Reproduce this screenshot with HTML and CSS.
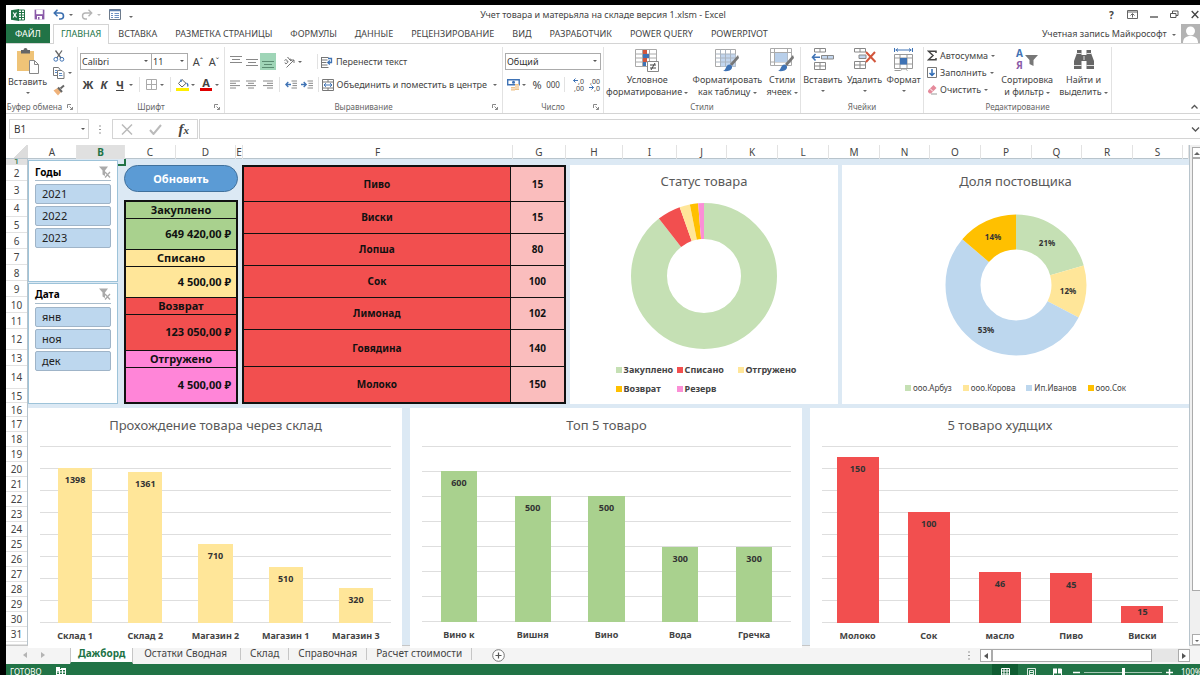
FILE: index.html
```html
<!DOCTYPE html>
<html lang="ru">
<head>
    <meta charset="UTF-8">
    <meta name="viewport" content="width=device-width, initial-scale=1.0">
    <title>Учет товара и матерьяла на складе версия 1.xlsm - Excel</title>
    <link rel="stylesheet" href="styles.css">
</head>
<body>
<div class="app">

    <!-- Title bar -->
    <header class="titlebar">
        <div class="quick">
            <svg class="logo" width="14" height="12" viewBox="0 0 14 12"><path d="M7 1h6.500v10H7z" fill="#fff" stroke="#217346"/><path d="M8 3.500h5M8 6h5M8 8.500h5M10.500 1v10" stroke="#217346"/><path d="M0 1.200 8 0v12L0 10.800z" fill="#217346"/><path d="M2.200 3.500 5.500 8.500M5.500 3.500 2.200 8.500" stroke="#fff" stroke-width="1.300"/></svg>
            <button class="ico" aria-label="Сохранить"><svg width="11" height="11" viewBox="0 0 11 11"><path d="M.6.6h9.800v9.800H.6z" fill="#8a5aa8"/><path d="M2.200.6h6.600v4.600H2.200z" fill="#fff"/><path d="M3 7h5v3.400H3z" fill="#fff"/><path d="M4 8h1.500v2.400H4z" fill="#8a5aa8"/></svg></button>
            <button class="ico" aria-label="Отменить"><svg width="12" height="11" viewBox="0 0 12 11"><path d="M1.500 4h6a3 3 0 0 1 0 6H6M4.500.8 1.300 4l3.200 3.200" fill="none" stroke="#3b6fb0" stroke-width="1.600"/></svg></button><i class="caret"></i>
            <button class="ico" aria-label="Вернуть"><svg width="12" height="11" viewBox="0 0 12 11"><path d="M10.500 4h-6a3 3 0 0 0 0 6H6M7.500.8 10.700 4 7.500 7.200" fill="none" stroke="#b5b5b5" stroke-width="1.400"/></svg></button><i class="caret pale"></i>
            <button class="ico" aria-label="Форма"><svg width="12" height="11" viewBox="0 0 12 11"><path d="M.5.5h11v10H.5z" fill="#fff" stroke="#6d7a8a"/><path d="M.5 1.500h11" stroke="#5b7fae" stroke-width="1.500"/><path d="M2 4.500h2M2 6.500h2M2 8.500h2M5.500 4.500h4.500M5.500 6.500h4.500M5.500 8.500h4.500" stroke="#6f93c4"/></svg></button>
            <span class="more"><i class="caret"></i></span>
        </div>
        <h1 class="doc-title">Учет товара и матерьяла на складе версия 1.xlsm - Excel</h1>
        <div class="window-buttons">
            <button aria-label="Справка"><b>?</b></button>
            <button aria-label="Параметры ленты"><svg width="11" height="9" viewBox="0 0 11 9"><path d="M.5.500h10v8H.500zM.5 2h10M5.500 7.500V4M3.500 5.500l2-2 2 2" fill="none" stroke="#666"/></svg></button>
            <button aria-label="Свернуть"><svg width="8" height="9" viewBox="0 0 8 9"><path d="M0 7h8" stroke="#555" stroke-width="1.400"/></svg></button>
            <button aria-label="Окно"><svg width="9" height="9" viewBox="0 0 9 9"><path d="M.500 3.500h5.500v4H.500zM2.500 3.500v-2.500h5.500v4.500H6" fill="none" stroke="#555"/></svg></button>
            <button aria-label="Закрыть"><svg width="8" height="9" viewBox="0 0 8 9"><path d="M.7 1 7.300 8M7.300 1 .7 8" stroke="#444" stroke-width="1.300"/></svg></button>
        </div>
    </header>

    <!-- Ribbon tabs -->
    <nav class="tabs">
        <a class="file" href="#">ФАЙЛ</a>
        <a class="active" href="#">ГЛАВНАЯ</a>
        <a href="#">ВСТАВКА</a>
        <a href="#">РАЗМЕТКА СТРАНИЦЫ</a>
        <a href="#">ФОРМУЛЫ</a>
        <a href="#">ДАННЫЕ</a>
        <a href="#">РЕЦЕНЗИРОВАНИЕ</a>
        <a href="#">ВИД</a>
        <a href="#">РАЗРАБОТЧИК</a>
        <a href="#">POWER QUERY</a>
        <a href="#">POWERPIVOT</a>
        <button class="account">Учетная запись Майкрософт <i class="caret"></i></button>
        <svg class="avatar" width="19" height="19" viewBox="0 0 19 19"><path d="M0 0h19v19H0z" fill="#b3b3b3"/><circle cx="9.500" cy="7" r="4.500" fill="#fff"/><path d="M2 19c0-5 3-7 7.500-7s7.500 2 7.500 7z" fill="#fff"/></svg>
    </nav>

    <!-- Ribbon -->
    <section class="ribbon">
        <div class="group g-clip">
            <div class="tools">
                <button class="big"><svg width="24" height="26" viewBox="0 0 24 26"><path d="M1 3h17v20H1z" fill="#efc377"/><path d="M5 2h2.500a2 2 0 0 1 4 0H14v3.500H5z" fill="#666"/><path d="M13.500 12.500h5l4 4v9h-9z" fill="#fff" stroke="#888"/><path d="M18.500 12.500v4h4" fill="none" stroke="#888"/></svg><span>Вставить</span><i class="caret"></i></button>
                <div class="stack">
                    <div class="line"><button class="ico" aria-label="Вырезать"><svg width="12" height="12" viewBox="0 0 12 12"><path d="M2.500.500 8 8M9 .500 3.800 8" stroke="#666" stroke-width="1.300"/><circle cx="2.800" cy="9.300" r="1.900" fill="none" stroke="#3f73b5"/><circle cx="8.900" cy="9.300" r="1.900" fill="none" stroke="#3f73b5"/></svg></button></div>
                    <div class="line"><button class="ico" aria-label="Копировать"><svg width="12" height="12" viewBox="0 0 12 12"><path d="M.500.500h5l1.500 2v6H.500z" fill="#fff" stroke="#777"/><path d="M4.500 3.500h4.500l2 2v6H4.500z" fill="#fff" stroke="#777"/><path d="M2 3.500h2M2 5.500h2M6 6.500h3M6 8.500h3.500" stroke="#5b8ac4"/></svg></button><i class="caret"></i></div>
                    <div class="line"><button class="ico" aria-label="Формат по образцу"><svg width="12" height="12" viewBox="0 0 12 12"><path d="m.5 6.500 4-2.500 3.500 4-3 3.500z" fill="#efb27a"/><path d="m5 3.500 4 4.500" stroke="#666" stroke-width="2"/><path d="m7.500 4.500 3.500-3" stroke="#666" stroke-width="2"/></svg></button></div>
                </div>
            </div>
            <footer>Буфер обмена<svg class="launch" width="6" height="6" viewBox="0 0 6 6"><path d="M.500 4V.500H4M2.500 2.500l3 3M5.500 3v2.500H3" fill="none" stroke="#888"/></svg></footer>
        </div>

        <div class="group g-font">
            <div class="tools rows">
                <div class="line">
                    <label class="combo font-name"><select aria-label="Шрифт"><option>Calibri</option></select></label><label class="combo font-size"><select aria-label="Размер"><option>11</option></select></label>
                    <button class="ico letter grow">A<sup>ˆ</sup></button>
                    <button class="ico letter">A<sup>ˇ</sup></button>
                </div>
                <div class="line">
                    <button class="ico letter"><b>Ж</b></button>
                    <button class="ico letter"><b><em>К</em></b></button>
                    <button class="ico letter"><b><u>Ч</u></b></button><i class="caret"></i>
                    <hr>
                    <button class="ico" aria-label="Границы"><svg width="11" height="11" viewBox="0 0 11 11"><path d="M.5.5h10v10H.5zM5.500.5v10M.5 5.500h10" fill="none" stroke="#aaa"/></svg></button><i class="caret"></i>
                    <hr>
                    <button class="ico" aria-label="Заливка"><svg width="13" height="13" viewBox="0 0 13 13"><path d="m6 1.500 4 3.800-4 3.700-3.500-3.500z" fill="#fff" stroke="#666"/><path d="M5 4V1.500M10.500 5c1.500 1 1.500 2.500 1 3.500" fill="none" stroke="#3f73b5" stroke-width="1.300"/><path d="M0 10h13v3H0z" fill="#ffef00"/></svg></button><i class="caret"></i>
                    <button class="ico font-color" aria-label="Цвет текста"><b>A</b></button><i class="caret"></i>
                </div>
            </div>
            <footer>Шрифт<svg class="launch" width="6" height="6" viewBox="0 0 6 6"><path d="M.500 4V.500H4M2.500 2.500l3 3M5.500 3v2.500H3" fill="none" stroke="#888"/></svg></footer>
        </div>

        <div class="group g-align">
            <div class="tools rows">
                <div class="line">
                    <button class="ico" aria-label="По верху"><svg width="12" height="12" viewBox="0 0 12 12"><path d="M0 .500h12M2 3.500h8M0 6.500h12" stroke="#888"/></svg></button>
                    <button class="ico" aria-label="По середине"><svg width="12" height="12" viewBox="0 0 12 12"><path d="M0 3.500h12M2 6.500h8M0 9.500h12" stroke="#888"/></svg></button>
                    <button class="ico on" aria-label="По низу"><svg width="12" height="12" viewBox="0 0 12 12"><path d="M0 5.500h12M2 8.500h8M0 11.500h12" stroke="#5b8c72"/></svg></button>
                    <button class="ico turn" aria-label="Ориентация"><svg width="12" height="12" viewBox="0 0 12 12"><path d="m3.500 11.500 7.500-7.500M8 4h3v3" fill="none" stroke="#777"/><path d="M1.500 4.500c1-1.500 3-.5 3.500 1.500M2 6.500a1.200 1.200 0 1 0 2-1M4.500 1l3.500 4M6.500 3.500c1-1 2 0 1.500 1.500" fill="none" stroke="#666"/></svg></button><i class="caret"></i>
                    <hr class="push">
                    <button class="text"><svg width="12" height="12" viewBox="0 0 12 12"><path d="M.500 1.500h7M.500 4h6M.500 6.500h5M.500 9h6M.500 11.500h7M.500 1v11" stroke="#777"/><path d="M7 2.500h3.500v4H7M8.800 4.500l-2 2 2 2" fill="none" stroke="#3f73b5" stroke-width="1.300"/></svg>Перенести текст</button>
                </div>
                <div class="line">
                    <button class="ico" aria-label="По левому краю"><svg width="11" height="9" viewBox="0 0 11 9"><path d="M0 1h10M0 3.300h6M0 5.600h10M0 8h6" stroke="#888"/></svg></button>
                    <button class="ico" aria-label="По центру"><svg width="11" height="9" viewBox="0 0 11 9"><path d="M0 1h10M2 3.300h6M0 5.600h10M2 8h6" stroke="#888"/></svg></button>
                    <button class="ico" aria-label="По правому краю"><svg width="11" height="9" viewBox="0 0 11 9"><path d="M1 1h10M5 3.300h6M1 5.600h10M5 8h6" stroke="#888"/></svg></button>
                    <hr>
                    <button class="ico" aria-label="Уменьшить отступ"><svg width="12" height="9" viewBox="0 0 12 9"><path d="M6.500 1H12M7.500 3.300H12M7.500 5.600H12M6.500 8H12" stroke="#888"/><path d="M1 4.500h5M3.300 2 .8 4.500 3.300 7" fill="none" stroke="#3f73b5" stroke-width="1.300"/></svg></button>
                    <button class="ico" aria-label="Увеличить отступ"><svg width="12" height="9" viewBox="0 0 12 9"><path d="M6.500 1H12M7.500 3.300H12M7.500 5.600H12M6.500 8H12" stroke="#888"/><path d="M0 4.500h5M2.700 2l2.500 2.500L2.700 7" fill="none" stroke="#3f73b5" stroke-width="1.300"/></svg></button>
                    <hr>
                    <button class="text"><svg width="12" height="12" viewBox="0 0 12 12"><path d="M.5.500h11v11H.5zM.5 3h11M.5 9h11M6 .5V3M6 9v2.500" fill="none" stroke="#777"/><path d="M2 6h8M4 4.200 2 6l2 1.800M8 4.200 10 6 8 7.800" fill="none" stroke="#3f73b5"/></svg>Объединить и поместить в центре</button><i class="caret"></i>
                </div>
            </div>
            <footer>Выравнивание<svg class="launch" width="6" height="6" viewBox="0 0 6 6"><path d="M.500 4V.500H4M2.500 2.500l3 3M5.500 3v2.500H3" fill="none" stroke="#888"/></svg></footer>
        </div>

        <div class="group g-num">
            <div class="tools rows">
                <div class="line">
                    <label class="combo num-format"><select aria-label="Формат числа"><option>Общий</option></select></label>
                </div>
                <div class="line">
                    <button class="ico" aria-label="Денежный формат"><svg width="13" height="12" viewBox="0 0 13 12"><path d="M.7.7h11.500v5H.7z" fill="#fff" stroke="#3f73b5" stroke-width="1.400"/><circle cx="6.500" cy="3.200" r="1.500" fill="#3f73b5"/><path d="M8 5h4v6H8zM4 8h4v3.500H4z" fill="#efc38a"/><path d="M8 7h4M8 9h4M4 9.800h4" stroke="#fff" stroke-width=".7"/></svg></button><i class="caret"></i>
                    <button class="ico letter">%</button>
                    <button class="ico zeros">000</button>
                    <hr>
                    <button class="ico digits"><span><svg width="5" height="5" viewBox="0 0 5 5"><path d="M.5 2.500H5M2.500.500l-2 2 2 2" fill="none" stroke="#3f73b5"/></svg>,0</span><span>,00</span></button>
                    <button class="ico digits"><span>,00</span><span><svg width="5" height="5" viewBox="0 0 5 5"><path d="M0 2.500h4.500M2.500.500l2 2-2 2" fill="none" stroke="#3f73b5"/></svg>,0</span></button>
                </div>
            </div>
            <footer>Число<svg class="launch" width="6" height="6" viewBox="0 0 6 6"><path d="M.500 4V.500H4M2.500 2.500l3 3M5.500 3v2.500H3" fill="none" stroke="#888"/></svg></footer>
        </div>

        <div class="group g-styles">
            <div class="tools">
                <button class="big"><svg width="24" height="24" viewBox="0 0 24 24"><path d="M.5 1.500h21v17H.5zM.5 6h21M.5 10h21M.5 14h21M7.500 1.500v17M14.500 1.500v17" fill="#fff" stroke="#aaa"/><path d="M8 2h4v4H8zM8 10h4v4H8z" fill="#d2563c"/><path d="M8 6h6v4H8zM8 14h3v4H8z" fill="#3f73b5"/><path d="M12.500 13.500h11v10h-11z" fill="#fff" stroke="#888"/><path d="M15 17h6M15 20h6M20 15l-4 7" stroke="#444"/></svg><span>Условное<br>форматирование <i class="caret"></i></span></button>
                <button class="big"><svg width="24" height="24" viewBox="0 0 24 24"><path d="M.5 1.500h20v17H.5z" fill="#fff" stroke="#aaa"/><path d="M6 6h14.500v12.500H6z" fill="#c3d6ee"/><path d="M.5 6h20M.5 10h20M.5 14h20M5.500 1.500v17M10.500 1.500v17M15.500 1.500v17" stroke="#aab4c0"/><path d="m23 7-8 9 2 2L24 10z" fill="#777"/><path d="M14 16.500c2 0 3.500 1.500 3 3.500-1 3-5 3.500-9 3 3-1 3-6 6-6.500z" fill="#3f73b5"/></svg><span>Форматировать<br>как таблицу <i class="caret"></i></span></button>
                <button class="big"><svg width="24" height="24" viewBox="0 0 24 24"><path d="M.5.500h21v17H.5zM.5 4.500h21M.5 14h21M4.500.500v17M17.500.500v17" fill="#fff" stroke="#aaa"/><path d="M5 5h12.500v9H5z" fill="#b8cfea"/><path d="m23 7-8 9 2 2L24 10z" fill="#777"/><path d="M14 16.500c2 0 3.500 1.500 3 3.500-1 3-5 3.500-9 3 3-1 3-6 6-6.500z" fill="#3f73b5"/></svg><span>Стили<br>ячеек <i class="caret"></i></span></button>
            </div>
            <footer>Стили</footer>
        </div>

        <div class="group g-cells">
            <div class="tools">
                <button class="big"><svg width="24" height="24" viewBox="0 0 24 24"><path d="M3.500.500h11v3.500h-11zM9 .5V4M3.500 14.500h11v7h-11zM3.500 18h11M9 14.500v7" fill="#fff" stroke="#888"/><path d="M10.500 7.500h12v3.500h-12z" fill="#c3d6ee" stroke="#888"/><path d="M16.500 7.500V11" stroke="#888"/><path d="M1.500 9.300H9M4.500 6 1.500 9.300l3 3.200" fill="none" stroke="#3f73b5" stroke-width="1.600"/></svg><span>Вставить</span><i class="caret"></i></button>
                <button class="big"><svg width="24" height="24" viewBox="0 0 24 24"><path d="M1.500.500h11v3.500h-11zM7 .5V4M1.500 13.500h11v7h-11zM1.500 17h11M7 13.500v7" fill="#fff" stroke="#888"/><path d="M6 7h7v3.500H6z" fill="#c3d6ee" stroke="#888"/><path d="m13 4 9.500 10M22 4l-9 10" stroke="#d2563c" stroke-width="2"/></svg><span>Удалить</span><i class="caret"></i></button>
                <button class="big"><svg width="24" height="24" viewBox="0 0 24 24"><path d="M2.500 0v4M20.500 0v4M3.500 2h16M6 .500 4 2l2 1.500M17 .500 19 2l-2 1.500" fill="none" stroke="#3f73b5"/><path d="M2.500 6.500h18v14h-18zM2.500 10h18M2.500 16h18M8 6.500v14M15 6.500v14" fill="#fff" stroke="#999"/><path d="M8 10h7v6.500H8z" fill="#3f73b5"/><path d="M2.500 22.500h6l2-1.500h3l2 1.500" fill="none" stroke="#999"/></svg><span>Формат</span><i class="caret"></i></button>
            </div>
            <footer>Ячейки</footer>
        </div>

        <div class="group g-edit">
            <div class="tools">
                <div class="stack">
                    <button class="text"><svg width="10" height="11" viewBox="0 0 10 11"><path d="M9 3V1.200H1.500L6 5.500 1.500 9.800H9V8" fill="none" stroke="#444" stroke-width="1.500"/></svg>Автосумма <i class="caret"></i></button>
                    <button class="text"><svg width="10" height="11" viewBox="0 0 10 11"><path d="M.500.500h9v10h-9z" fill="#fff" stroke="#777"/><path d="M5 2v6.500M2.500 6 5 8.500 7.500 6" fill="none" stroke="#2f6cb5" stroke-width="1.500"/></svg>Заполнить <i class="caret"></i></button>
                    <button class="text"><svg width="10" height="11" viewBox="0 0 10 11"><path d="m1 6.500 5.500-5.500L9.500 4 4 9.500H2.500L1 8z" fill="#e58a9b"/><path d="m3 4.500 3 3" stroke="#fff"/><path d="M4 10h6" stroke="#999"/></svg>Очистить <i class="caret"></i></button>
                </div>
                <button class="big sort"><svg width="24" height="24" viewBox="0 0 24 24"><path d="M10 7h13l-4.500 5v6l-4-2v-4z" fill="#777"/><text x="1" y="9" fill="#3f73b5">А</text><text x="1" y="21" fill="#8a5aa8">Я</text></svg><span>Сортировка<br>и фильтр <i class="caret"></i></span></button>
                <button class="big"><svg width="24" height="24" viewBox="0 0 24 24"><path d="M5 2h4.500v5h5V2H19v3l3 8v8h-7.500v-8h-5v8H2v-8l3-8z" fill="#666"/><path d="M2 17.500h7.500M14.500 17.500H22M5 5.500h4.500M14.500 5.500H19M12 8v4" stroke="#fff" stroke-width=".8"/></svg><span>Найти и<br>выделить <i class="caret"></i></span></button>
            </div>
            <footer>Редактирование</footer>
        </div>
        <button class="collapse" aria-label="Свернуть ленту"><svg width="7" height="5" viewBox="0 0 7 5"><path d="m.5 4.500 3-3 3 3" fill="none" stroke="#555" stroke-width="1.300"/></svg></button>
    </section>

    <!-- Formula bar -->
    <div class="formula-bar">
        <label class="combo name-box"><select aria-label="Имя"><option>B1</option></select></label>
        <svg class="dots" width="2" height="9" viewBox="0 0 2 9"><path d="M0 1h2M0 4.500h2M0 8h2" stroke="#999"/></svg>
        <div class="formula-buttons">
            <button aria-label="Отмена"><svg width="12" height="11" viewBox="0 0 12 11"><path d="m1 .5 10 10M11 .5l-10 10" stroke="#bbb" stroke-width="1.500"/></svg></button>
            <button aria-label="Ввод"><svg width="13" height="11" viewBox="0 0 13 11"><path d="m1 6 3.500 4L12 1" fill="none" stroke="#bbb" stroke-width="2"/></svg></button>
            <button class="fx"><em>f<small>x</small></em></button>
        </div>
        <input class="formula" type="text" aria-label="Строка формул">
        <svg class="expand" width="9" height="9" viewBox="0 0 9 9"><path d="m1 2.500 3.500 3.500L8 2.500" fill="none" stroke="#555" stroke-width="1.300"/></svg>
    </div>

    <!-- Sheet -->
    <main class="sheet">
        <div class="sheet-body">
            <div class="corner"></div>
            <div class="cols">
                <span>A</span><span class="sel">B</span><span>C</span><span>D</span><span>E</span><span>F</span><span>G</span><span>H</span><span>I</span><span>J</span><span>K</span><span>L</span><span>M</span><span>N</span><span>O</span><span>P</span><span>Q</span><span>R</span><span>S</span><span></span>
            </div>
            <div class="row-nums">
                <span class="sel">1</span><span>2</span><span>3</span><span>4</span><span>5</span><span>6</span><span>7</span><span>8</span><span>9</span><span>10</span><span>11</span><span>12</span><span>13</span><span>14</span><span>15</span><span>16</span><span>17</span><span>18</span><span>19</span><span>20</span><span>21</span><span>22</span><span>23</span><span>24</span><span>25</span><span>26</span><span>27</span><span>28</span><span>29</span><span>30</span><span>31</span><span></span>
            </div>

            <div class="dashboard">
                <div class="cell-cursor"></div>
                <div class="top-row">
                    <div class="slicers">
                        <section class="slicer">
                            <h2>Годы <svg width="12" height="12" viewBox="0 0 12 12"><path d="M0 .500h9L6 4.500V10L3.500 8.500v-4z" fill="#aaa"/><path d="m6 6 5 5.500M11 6l-5 5.500" stroke="#aaa" stroke-width="1.300"/></svg></h2>
                            <button>2021</button>
                            <button>2022</button>
                            <button>2023</button>
                        </section>
                        <section class="slicer">
                            <h2>Дата <svg width="12" height="12" viewBox="0 0 12 12"><path d="M0 .500h9L6 4.500V10L3.500 8.500v-4z" fill="#aaa"/><path d="m6 6 5 5.500M11 6l-5 5.500" stroke="#aaa" stroke-width="1.300"/></svg></h2>
                            <button>янв</button>
                            <button>ноя</button>
                            <button>дек</button>
                        </section>
                    </div>

                    <div class="kpi">
                        <button class="refresh">Обновить</button>
                        <table class="kpi-table">
                            <tr class="green"><th>Закуплено</th></tr>
                            <tr class="green"><td>649 420,00 ₽</td></tr>
                            <tr class="yellow"><th>Списано</th></tr>
                            <tr class="yellow"><td>4 500,00 ₽</td></tr>
                            <tr class="red"><th>Возврат</th></tr>
                            <tr class="red tall"><td>123 050,00 ₽</td></tr>
                            <tr class="pink"><th>Отгружено</th></tr>
                            <tr class="pink tall"><td>4 500,00 ₽</td></tr>
                        </table>
                    </div>

                    <table class="stock">
                        <tr class="first"><td>Пиво</td><td>15</td></tr>
                        <tr><td>Виски</td><td>15</td></tr>
                        <tr><td>Лопша</td><td>80</td></tr>
                        <tr><td>Сок</td><td>100</td></tr>
                        <tr><td>Лимонад</td><td>102</td></tr>
                        <tr class="tall"><td>Говядина</td><td>140</td></tr>
                        <tr class="tall"><td>Молоко</td><td>150</td></tr>
                    </table>

                    <section class="card status">
                        <h2>Статус товара</h2>
                        <svg class="donut" width="146" height="146" viewBox="0 0 146 146">
                            <g fill="none" stroke-width="36" transform="rotate(-90 73 73)">
                                <circle cx="73" cy="73" r="55" pathLength="360" stroke="#c5e0b4" stroke-dasharray="321.800 360"/>
                                <circle cx="73" cy="73" r="55" pathLength="360" stroke="#f24f4f" stroke-dasharray="18.700 360" stroke-dashoffset="-321.800"/>
                                <circle cx="73" cy="73" r="55" pathLength="360" stroke="#ffe699" stroke-dasharray="8.300 360" stroke-dashoffset="-340.500"/>
                                <circle cx="73" cy="73" r="55" pathLength="360" stroke="#ffc000" stroke-dasharray="6.500 360" stroke-dashoffset="-348.800"/>
                                <circle cx="73" cy="73" r="55" pathLength="360" stroke="#fb8fd6" stroke-dasharray="4.700 360" stroke-dashoffset="-355.300"/>
                            </g>
                        </svg>
                        <ul class="legend">
                            <li class="mint">Закуплено</li>
                            <li class="red">Списано</li>
                            <li class="yellow">Отгружено</li>
                            <li class="amber">Возврат</li>
                            <li class="pink">Резерв</li>
                        </ul>
                    </section>

                    <section class="card share">
                        <h2>Доля постовщика</h2>
                        <svg class="donut" width="142" height="142" viewBox="0 0 142 142">
                            <g fill="none" stroke-width="35" transform="rotate(-90 71 71)">
                                <circle cx="71" cy="71" r="53" pathLength="360" stroke="#c5e0b4" stroke-dasharray="73.800 360"/>
                                <circle cx="71" cy="71" r="53" pathLength="360" stroke="#ffe699" stroke-dasharray="43.600 360" stroke-dashoffset="-73.800"/>
                                <circle cx="71" cy="71" r="53" pathLength="360" stroke="#bdd7ee" stroke-dasharray="193 360" stroke-dashoffset="-117.400"/>
                                <circle cx="71" cy="71" r="53" pathLength="360" stroke="#ffc000" stroke-dasharray="49.600 360" stroke-dashoffset="-310.400"/>
                            </g>
                            <text x="102" y="32">21%</text>
                            <text x="123" y="80">12%</text>
                            <text x="41" y="119">53%</text>
                            <text x="48" y="26">14%</text>
                        </svg>
                        <ul class="legend">
                            <li class="mint">ооо.Арбуз</li>
                            <li class="yellow">ооо.Корова</li>
                            <li class="blue">Ип.Иванов</li>
                            <li class="amber">ооо.Сок</li>
                        </ul>
                    </section>
                </div>

                <div class="bottom-row">
                    <section class="card bars yellow">
                        <h2>Прохождение товара через склад</h2>
                        <div class="plot">
                            <div class="bar" style="height: 87.4%">1398</div>
                            <div class="bar" style="height: 85.1%">1361</div>
                            <div class="bar" style="height: 44.4%">710</div>
                            <div class="bar" style="height: 31.9%">510</div>
                            <div class="bar" style="height: 20%">320</div>
                        </div>
                        <div class="names"><span>Склад 1</span><span>Склад 2</span><span>Магазин 2</span><span>Магазин 1</span><span>Магазин 3</span></div>
                    </section>
                    <section class="card bars green">
                        <h2>Топ 5 товаро</h2>
                        <div class="plot">
                            <div class="bar" style="height: 85.7%">600</div>
                            <div class="bar" style="height: 71.4%">500</div>
                            <div class="bar" style="height: 71.4%">500</div>
                            <div class="bar" style="height: 42.9%">300</div>
                            <div class="bar" style="height: 42.9%">300</div>
                        </div>
                        <div class="names"><span>Вино к</span><span>Вишня</span><span>Вино</span><span>Вода</span><span>Гречка</span></div>
                    </section>
                    <section class="card bars red">
                        <h2>5 товаро худщих</h2>
                        <div class="plot">
                            <div class="bar" style="height: 93.8%">150</div>
                            <div class="bar" style="height: 62.5%">100</div>
                            <div class="bar" style="height: 28.8%">46</div>
                            <div class="bar" style="height: 28.1%">45</div>
                            <div class="bar low" style="height: 9.4%">15</div>
                        </div>
                        <div class="names"><span>Молоко</span><span>Сок</span><span>масло</span><span>Пиво</span><span>Виски</span></div>
                    </section>
                </div>
            </div>
        </div>

        <div class="vscroll">
            <button aria-label="Вверх"><i class="caret up"></i></button>
            <div class="thumb"></div>
            <button aria-label="Вниз"><i class="caret"></i></button>
        </div>
    </main>

    <!-- Sheet tabs -->
    <nav class="sheet-tabs">
        <span class="nav-arrows"><i class="caret left"></i><i class="caret right"></i></span>
        <a class="active" href="#">Дажборд</a>
        <a class="first" href="#">Остатки Сводная</a>
        <a href="#">Склад</a>
        <a href="#">Справочная</a>
        <a href="#">Расчет стоимости</a>
        <button class="add" aria-label="Новый лист"><svg width="13" height="13" viewBox="0 0 13 13"><circle cx="6.500" cy="6.500" r="5.800" fill="#fff" stroke="#777"/><path d="M6.500 3.500v6M3.500 6.500h6" stroke="#555" stroke-width="1.200"/></svg></button>
        <svg class="dots" width="2" height="9" viewBox="0 0 2 9"><path d="M0 1h2M0 4.500h2M0 8h2" stroke="#999"/></svg>
        <div class="hscroll">
            <button aria-label="Влево"><i class="caret left"></i></button>
            <div class="thumb"></div>
            <button aria-label="Вправо"><i class="caret right"></i></button>
        </div>
    </nav>

    <!-- Status bar -->
    <footer class="statusbar">
        <span>ГОТОВО</span>
        <svg class="macro" width="10" height="11" viewBox="0 0 10 11"><path d="M.500 2.500h9v8h-9zM.500 5h9M.500 7.500h9M3.500 2.500v8M6.500 2.500v8" fill="none" stroke="#fff"/><path d="M0 0h4v4H0zM5 1h5v2H5z" fill="#fff"/></svg>
        <div class="views">
            <button class="on" aria-label="Обычный"><svg width="9" height="9" viewBox="0 0 9 9"><path d="M.500.500h8v8h-8zM.500 3h8M.500 6h8M3 .500v8M6 .500v8" fill="none" stroke="#fff"/></svg></button>
            <button aria-label="Разметка"><svg width="9" height="9" viewBox="0 0 9 9"><path d="M.500.500h8v8h-8zM2.500 2.500h4v6h-4zM3 4.500h3M3 6.500h3" fill="none" stroke="#dcebe2"/></svg></button>
            <button aria-label="Страничный"><svg width="9" height="9" viewBox="0 0 9 9"><path d="M0 .500h4v5H0zM5 .500h3.500v5H5z" fill="#fff"/><path d="M.500 1v8M8.500 1v8" stroke="#fff"/></svg></button>
        </div>
        <button class="zoom-btn" aria-label="Мельче"><svg width="7" height="7" viewBox="0 0 7 7"><path d="M0 3.500h7" stroke="#fff" stroke-width="1.500"/></svg></button>
        <input class="zoom" type="range" min="0" max="100" value="50" aria-label="Масштаб">
        <button class="zoom-btn" aria-label="Крупнее"><svg width="7" height="7" viewBox="0 0 7 7"><path d="M0 3.500h7M3.500 0v7" stroke="#fff" stroke-width="1.500"/></svg></button>
        <span class="percent">100%</span>
    </footer>
</div>
</body>
</html>
```
FILE: styles.css
```css
* {
    box-sizing: border-box;
}
body {
    margin: 0;
    padding: 5px 0 0 6px;
    height: 100vh;
    overflow: hidden;
    background-color: #000;
    color: #444;
    font-family: "Noto Sans", "Open Sans", sans-serif;
    font-size: 10px;
    line-height: 12px;
}
.app {
    display: flex;
    flex-direction: column;
    background-color: #fff;
}
button {
    margin: 0;
    padding: 0;
    border: none;
    background: none;
    color: inherit;
    font: inherit;
    cursor: pointer;
}
a {
    color: inherit;
    text-decoration: none;
}
h1, h2 {
    margin: 0;
    font-weight: normal;
}
svg {
    display: block;
    flex: none;
}
.caret {
    display: inline-block;
    flex: none;
    border: 2px solid transparent;
    border-top-color: #666;
    border-bottom: none;
    vertical-align: middle;
}
.caret.pale {
    border-top-color: #bbb;
}
.caret.up {
    border: 3px solid transparent;
    border-bottom-color: #666;
    border-top: none;
}
.caret.left {
    border: 3px solid transparent;
    border-right: 4px solid #555;
    border-left: none;
}
.caret.right {
    border: 3px solid transparent;
    border-left: 4px solid #555;
    border-right: none;
}

/* title bar */
.titlebar {
    display: grid;
    grid-template-columns: 1fr auto 1fr;
    align-items: center;
    height: 19px;
}
.quick {
    display: flex;
    align-items: center;
    padding-left: 5px;
}
.quick .logo {
    margin-right: 4px;
}
.quick .ico {
    width: 20px;
}
.quick .caret {
    margin: 0 4px 0 0;
}
.quick .more {
    padding: 2px 0 0 4px;
    line-height: 4px;
}
.more .caret {
    margin: 0;
}
.doc-title {
    font-size: 9px;
}
.window-buttons {
    display: flex;
    justify-content: flex-end;
}
.window-buttons button {
    display: flex;
    justify-content: center;
    align-items: center;
    width: 21px;
}
.window-buttons button:last-child {
    justify-content: flex-end;
    width: 15px;
    padding-right: 1px;
}

/* ribbon tabs */
.tabs {
    display: flex;
    height: 20px;
    border-bottom: 1px solid #d4d4d4;
    font-size: 9px;
    line-height: 19px;
}
.tabs a {
    padding: 0 9px;
}
.tabs .file {
    margin-right: 3px;
    background-color: #217346;
    color: #fff;
}
.tabs .active {
    height: 20px;
    padding: 0 7px;
    border: 1px solid #d4d4d4;
    border-bottom: none;
    background-color: #fff;
    color: #217346;
    line-height: 18px;
}
.tabs .account {
    margin-left: auto;
    padding-right: 5px;
}
.account .caret {
    margin-left: 3px;
}

/* ribbon */
.ribbon {
    display: flex;
    height: 70px;
    padding-top: 3px;
    border-bottom: 1px solid #d4d4d4;
    font-size: 9px;
}
.group {
    display: flex;
    flex-direction: column;
    border-right: 1px solid #e2e2e2;
}
.group footer {
    position: relative;
    height: 14px;
    color: #666;
    font-size: 8px;
    line-height: 16px;
    text-align: center;
    white-space: nowrap;
}
.launch {
    position: absolute;
    right: 4px;
    top: 5px;
}
.g-clip { width: 72px; }
.g-clip footer { padding-right: 14px; }
.g-font { width: 147px; }
.g-align { width: 278px; }
.g-num { width: 101px; }
.g-styles { width: 197px; }
.g-cells { width: 123px; }
.g-edit { width: 188px; }
.tools {
    display: flex;
    justify-content: space-around;
    height: 52px;
}
.tools.rows {
    flex-direction: column;
    justify-content: flex-start;
    gap: 6px;
    padding: 6px 2px 0;
}
.line {
    display: flex;
    align-items: center;
    height: 17px;
}
.line .caret {
    margin: 0 3px 0 1px;
}
.line .text + .caret {
    margin-left: 6px;
}
.line hr {
    width: 1px;
    height: 15px;
    margin: 0 3px;
    border: none;
    background-color: #e2e2e2;
}
.line .push {
    margin-left: 12px;
}
.ico {
    display: flex;
    justify-content: center;
    align-items: center;
    width: 16px;
    height: 17px;
}
.ico.on {
    background-color: #9fd5b7;
}
.ico.turn {
    margin-left: 5px;
}
.ico.letter {
    font-size: 11px;
}
.ico.grow {
    margin-left: 2px;
}
.ico sup {
    font-size: 8px;
}
.zeros {
    font-size: 8px;
}
.font-color b {
    width: 12px;
    border-bottom: 3px solid #e00000;
    font-size: 11px;
    line-height: 10px;
    text-align: center;
}
.digits {
    flex-direction: column;
    align-items: flex-end;
    font-size: 7px;
    line-height: 7px;
}
.digits span {
    display: flex;
}
.big {
    display: flex;
    flex-direction: column;
    align-items: center;
    padding-top: 1px;
    white-space: nowrap;
}
.big svg {
    margin-bottom: 2px;
}
.big > .caret {
    margin-top: 4px;
}
.g-align .tools {
    padding-left: 3px;
}
.sort text {
    font-size: 10px;
    font-weight: bold;
}
.text {
    display: flex;
    align-items: center;
    gap: 3px;
    white-space: nowrap;
}
.stack {
    display: flex;
    flex-direction: column;
}
.stack .text {
    height: 17px;
}
.combo {
    position: relative;
    height: 17px;
    border: 1px solid #ababab;
}
.combo select {
    width: 100%;
    height: 100%;
    padding: 0 0 0 1px;
    border: none;
    background: none;
    color: #333;
    font: inherit;
    appearance: none;
}
.combo::after {
    content: "";
    position: absolute;
    right: 3px;
    top: 6px;
    border: 2px solid transparent;
    border-top-color: #555;
    border-bottom: none;
}
.font-name { width: 72px; }
.font-size { width: 37px; margin-left: -1px; }
.num-format { width: 96px; }
.collapse {
    align-self: flex-end;
    margin: 0 2px 4px auto;
}

/* formula bar */
.formula-bar {
    display: flex;
    align-items: center;
    padding: 5px 0 6px 3px;
}
.name-box,
.formula-buttons,
.formula {
    height: 20px;
    border: 1px solid #d4d4d4;
}
.name-box {
    width: 80px;
}
.name-box select {
    padding-left: 4px;
}
.name-box::after {
    top: 8px;
}
.formula-bar .dots {
    margin: 0 11px 0 10px;
}
.formula-buttons {
    display: flex;
    align-items: center;
    justify-content: space-around;
    width: 86px;
    margin-right: 1px;
}
.fx {
    font-family: "Liberation Serif", serif;
    font-size: 15px;
    font-weight: bold;
}
.fx small {
    font-size: 11px;
}
.formula {
    flex: 1;
    min-width: 0;
    border-right: none;
}
.expand {
    margin-left: -9px;
}

/* sheet */
.sheet {
    display: flex;
}
.sheet-body {
    flex: 1;
    display: grid;
    grid-template-columns: 22px minmax(0, 1fr);
    grid-template-rows: 14px auto;
    border-right: 1px solid #b8c4cc;
}
.corner {
    border-bottom: 1px solid #b8c4cc;
    background: linear-gradient(135deg, transparent 60%, #dcdcdc 60%);
}
.cols {
    display: grid;
    grid-template-columns: 49fr 48fr 51fr 60fr 7fr 270fr 53fr 57fr 54fr 50fr 51fr 51fr 51fr 50fr 51fr 51fr 50fr 51fr 50fr 6fr;
    border-bottom: 1px solid #b8c4cc;
    line-height: 14px;
    text-align: center;
}
.cols span {
    min-width: 0;
    border-right: 1px solid #e2e2e2;
}
.cols .sel {
    border-bottom: 2px solid #217346;
    background-color: #e0e0e0;
    color: #217346;
    font-weight: bold;
}
.row-nums {
    display: grid;
    grid-template-rows: 6px 16px 19px 17px 16px 16px 16px 16px 16px 16px 16px 21px 16px 23px 14px 14px repeat(15, 15px) 3px;
    border-right: 1px solid #b8c4cc;
}
.row-nums span {
    display: flex;
    justify-content: center;
    align-items: center;
    overflow: hidden;
    border-bottom: 1px solid #e2e2e2;
}
.row-nums .sel {
    background-color: #e0e0e0;
    color: #217346;
}
.dashboard {
    position: relative;
    display: flex;
    flex-direction: column;
    gap: 5px;
    background-color: #dce9f4;
}
.cell-cursor {
    position: absolute;
    left: 90px;
    top: 0;
    width: 8px;
    height: 7px;
    border: 1px solid #217346;
    border-width: 0 2px 2px 0;
}
.top-row {
    display: grid;
    grid-template-columns: 92fr 114fr 324fr 268fr 347fr;
    column-gap: 4px;
    height: 244px;
}
.bottom-row {
    display: grid;
    grid-template-columns: 374fr 392fr 379fr;
    column-gap: 8px;
    height: 237px;
}
.card {
    min-width: 0;
    background-color: #fff;
}
.card h2 {
    color: #595959;
    font-size: 13px;
    line-height: 18px;
    text-align: center;
}
.top-row .card {
    display: flex;
    flex-direction: column;
    align-items: center;
    margin-top: 6px;
    padding-top: 7px;
}

/* slicers */
.slicers {
    display: flex;
    flex-direction: column;
    gap: 1px;
    margin-right: 2px;
    padding-top: 1px;
}
.slicer {
    flex: 1;
    display: flex;
    flex-direction: column;
    gap: 2px;
    padding: 2px 6px;
    border: 1px solid #9dc3d9;
    background-color: #fff;
}
.slicer h2 {
    display: flex;
    justify-content: space-between;
    align-items: center;
    height: 18px;
    margin-bottom: 1px;
    border-bottom: 1px solid #a9bccb;
    color: #000;
    font-size: 10px;
    font-weight: bold;
}
.slicer button {
    height: 20px;
    padding-left: 6px;
    border: 1px solid #9fb4c8;
    border-radius: 2px;
    background-color: #bdd7ee;
    color: #222;
    font-size: 11px;
    text-align: left;
}

/* tables */
.kpi {
    padding-top: 6px;
}
.refresh {
    display: block;
    width: 100%;
    height: 27px;
    margin-bottom: 8px;
    border: 1px solid #41719c;
    border-radius: 14px;
    background-color: #5b9bd5;
    color: #fff;
    font-size: 11px;
    font-weight: bold;
}
table {
    width: 100%;
    border: 2px solid #111;
    border-collapse: collapse;
    color: #111;
    font-size: 11px;
    font-weight: bold;
}
th, td {
    padding: 0;
    border: 1px solid #111;
}
.kpi-table th {
    height: 17px;
}
.kpi-table td {
    height: 31px;
    padding-right: 5px;
    text-align: right;
}
.kpi-table .tall td {
    height: 36px;
}
tr.green { background-color: #a9d18e; }
tr.yellow { background-color: #ffe699; }
tr.red { background-color: #f24f4f; }
tr.pink { background-color: #ff85d8; }
.stock {
    height: 238px;
    margin-top: 6px;
    font-size: 10px;
    text-align: center;
}
.stock td {
    height: 32px;
    background-color: #f24f4f;
}
.stock .first td {
    height: 35px;
}
.stock .tall td {
    height: 37px;
}
.stock td:last-child {
    width: 17%;
    background-color: #fabdbd;
}

/* donuts */
.status .donut {
    margin: 13px 0 11px;
}
.share .donut {
    margin: 24px 0 22px;
}
.donut text {
    fill: #333;
    font-size: 8px;
    font-weight: bold;
    text-anchor: middle;
}
.legend {
    display: flex;
    gap: 11px;
    margin: 0;
    padding: 0;
    list-style: none;
    font-size: 8px;
    line-height: 19px;
}
.status .legend {
    display: grid;
    grid-template-columns: 61px 61px auto;
    gap: 0;
    padding-left: 4px;
    font-size: 9px;
    font-weight: bold;
}
.legend li {
    display: flex;
    align-items: center;
    gap: 2px;
}
.legend li::before {
    content: "";
    width: 6px;
    height: 6px;
}
.legend .mint::before { background-color: #c5e0b4; }
.legend .red::before { background-color: #f24f4f; }
.legend .yellow::before { background-color: #ffe699; }
.legend .blue::before { background-color: #bdd7ee; }
.legend .amber::before { background-color: #ffc000; }
.legend .pink::before { background-color: #fb8fd6; }

/* bar charts */
.bars {
    padding: 8px 11px 0 12px;
}
.bars .plot {
    display: grid;
    grid-template-columns: repeat(5, 1fr);
    align-items: end;
    justify-items: center;
    height: 177px;
    margin-top: 12px;
    background: linear-gradient(#dedede 1px, transparent 1px) 0 0 / 100% 22px;
}
.bars.green .plot {
    height: 176px;
    background-size: 100% 25px;
}
.bar {
    width: 49%;
    padding-top: 6px;
    color: #333;
    font-size: 9px;
    font-weight: bold;
    text-align: center;
}
.bar.low {
    padding-top: 0;
}
.bars.yellow .bar { background-color: #ffe699; }
.bars.green .bar { background-color: #a9d18e; }
.bars.red .bar {
    width: 59%;
    background-color: #f24f4f;
}
.names {
    display: grid;
    grid-template-columns: repeat(5, 1fr);
    font-size: 9px;
    font-weight: bold;
    line-height: 25px;
    text-align: center;
    white-space: nowrap;
}

/* scroll bars */
.vscroll {
    display: flex;
    flex-direction: column;
    width: 10px;
    padding: 2px 0 0 2px;
    background-color: #f0f0f0;
}
.vscroll button,
.vscroll .thumb,
.hscroll button,
.hscroll .thumb {
    border: 1px solid #ababab;
    background-color: #fff;
    line-height: 8px;
}
.vscroll button {
    height: 11px;
    border-right: none;
}
.vscroll .thumb {
    flex: 1;
    margin-bottom: 43px;
    border-right: none;
}
.hscroll {
    display: flex;
    width: 210px;
    height: 13px;
    margin-right: 10px;
    background-color: #e6e6e6;
}
.hscroll button {
    width: 12px;
}
.hscroll .thumb {
    flex: 1;
    margin-right: 26px;
}

/* sheet tabs */
.sheet-tabs {
    display: flex;
    align-items: center;
    height: 19px;
    border-top: 1px solid #c6c6c6;
    background-color: #f4f4f4;
    line-height: 13px;
}
.nav-arrows {
    display: flex;
    gap: 14px;
    width: 64px;
    padding-left: 17px;
    opacity: 0.4;
}
.sheet-tabs a {
    height: 13px;
    margin-bottom: 4px;
    padding: 0 9px;
    border-right: 1px solid #c6c6c6;
}
.sheet-tabs .first {
    padding: 0 13px 0 11px;
}
.sheet-tabs .active {
    height: 18px;
    margin: 0;
    padding: 1px 7px;
    border: 1px solid #c6c6c6;
    border-width: 0 1px;
    border-bottom: 2px solid #217346;
    background-color: #fff;
    color: #217346;
    font-weight: bold;
}
.add {
    margin-left: 20px;
}
.sheet-tabs .dots {
    margin: 0 10px 0 auto;
}

/* status bar */
.statusbar {
    display: flex;
    align-items: center;
    height: 16px;
    padding-left: 4px;
    background-color: #217346;
    color: #fff;
    font-size: 8px;
}
.macro {
    margin-left: 14px;
}
.views {
    display: flex;
    margin: 0 3px 0 auto;
}
.views button {
    display: flex;
    justify-content: center;
    align-items: center;
    width: 26px;
    height: 16px;
}
.views .on {
    background-color: #0f5c32;
}
.zoom {
    width: 78px;
    height: 10px;
    margin: 0 4px;
    background: linear-gradient(#a6c7b5, #a6c7b5) 0 50% / 100% 1px no-repeat;
    appearance: none;
}
.zoom::-webkit-slider-thumb {
    width: 3px;
    height: 9px;
    background-color: #fff;
    appearance: none;
}
.percent {
    width: 27px;
    padding-left: 8px;
}
```
